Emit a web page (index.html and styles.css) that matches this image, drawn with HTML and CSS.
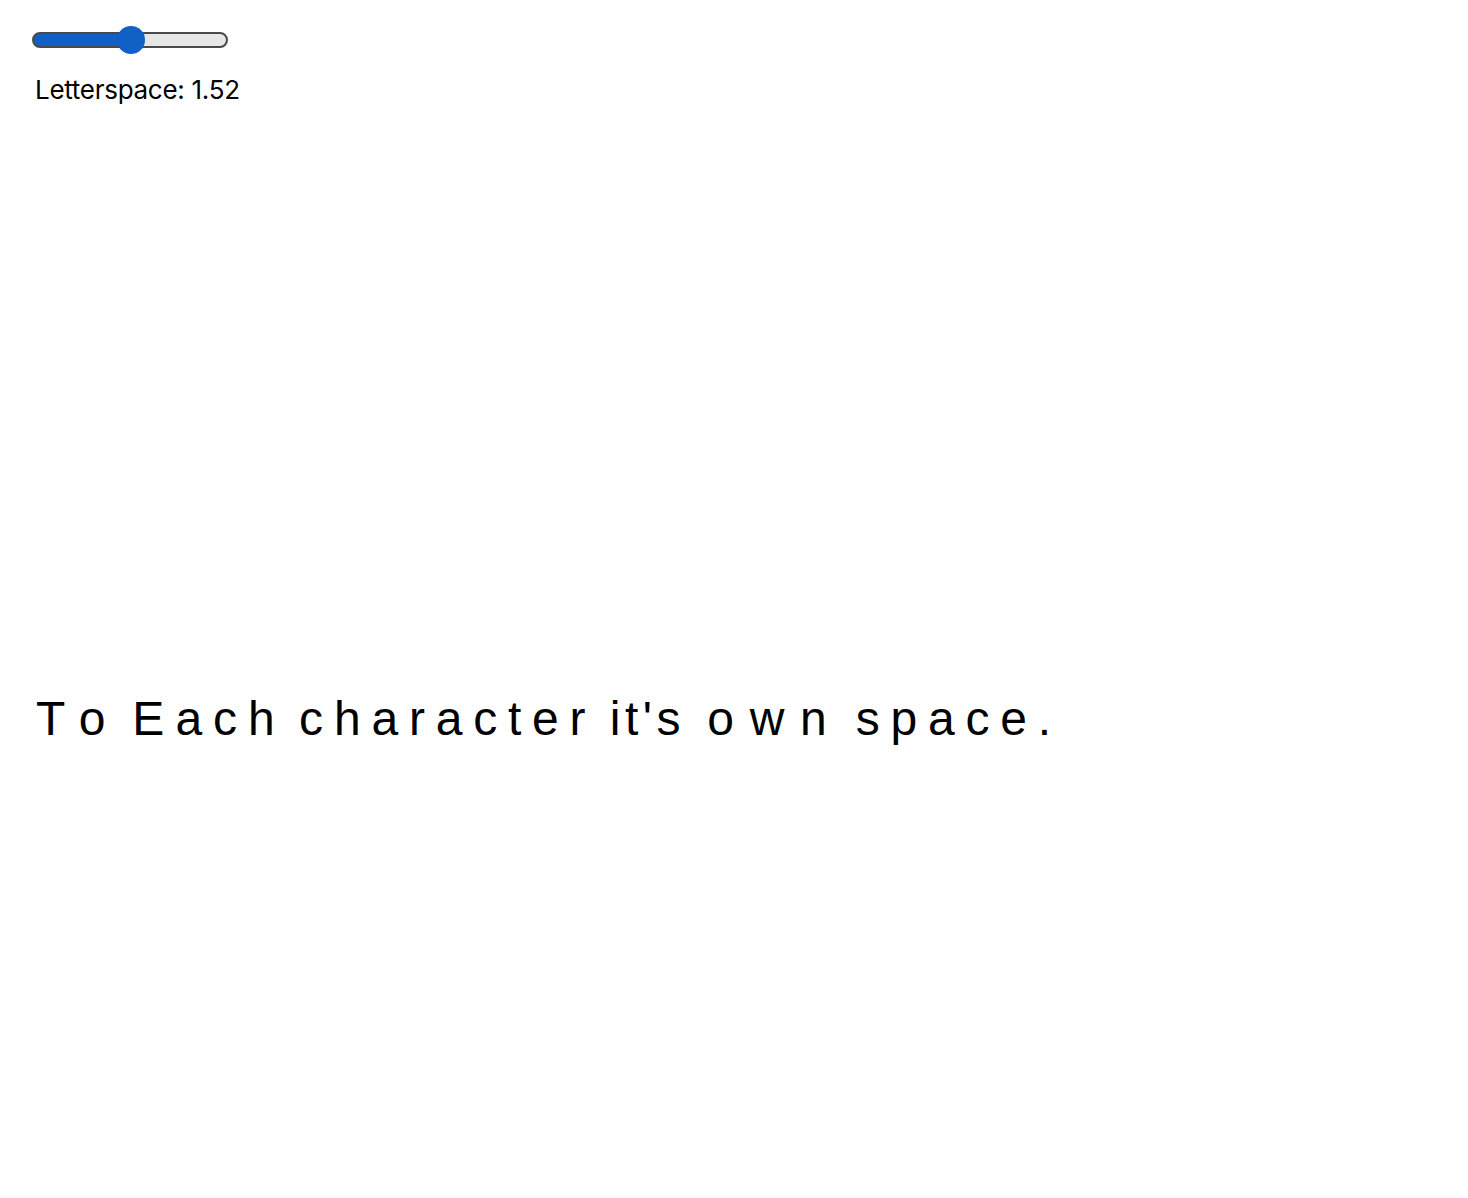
FILE: index.html
```html
<!DOCTYPE html>
<html lang="en">
<head>
<meta charset="utf-8">
<title>Letterspace</title>
<link rel="stylesheet" href="styles.css">
</head>
<body>
<main class="page">
  <section class="controls">
    <input class="slider" type="range" min="0" max="3" step="0.01" value="1.52" style="--fill: 51.3%" aria-label="Letterspace">
    <p class="label">Letterspace: 1.52</p>
  </section>
  <p class="specimen"><span class="word w-to">To</span> <span class="word w-each">Each</span> <span class="word w-character">character</span> <span class="word w-its"><span class="narrow">it'</span>s</span> <span class="word w-own">own</span> <span class="word w-space">space.</span></p>
</main>
</body>
</html>
```
FILE: styles.css
```css
html, body {
  margin: 0;
  padding: 0;
  background: #ffffff;
}

.page {
  display: flex;
  flex-direction: column;
  padding: 32px 0 0 0;
}

.controls {
  display: flex;
  flex-direction: column;
  align-items: flex-start;
  padding-left: 32px;
}

.slider {
  -webkit-appearance: none;
  appearance: none;
  margin: 0;
  padding: 0;
  width: 196px;
  height: 16px;
  box-sizing: border-box;
  border: 2px solid #4a4a4a;
  border-radius: 8px;
  background: linear-gradient(to right, #1160c6 0, #1160c6 var(--fill), #e6e6e6 var(--fill), #e6e6e6 100%);
  outline: none;
}

.slider::-webkit-slider-thumb {
  -webkit-appearance: none;
  appearance: none;
  width: 28px;
  height: 28px;
  border-radius: 50%;
  background: #1160c6;
  border: none;
}

.label {
  margin: 26px 0 0 3px;
  font-family: Inter, "Liberation Sans", sans-serif;
  font-size: 26px;
  line-height: 32px;
  letter-spacing: -0.011em;
  color: #000;
}

.specimen {
  margin: 585px 0 0 36px;
  font-family: "Liberation Sans", Arial, sans-serif;
  font-size: 48px;
  line-height: 55px;
  letter-spacing: 0;
  font-kerning: none;
  color: #000;
  white-space: nowrap;
}

.word {
  letter-spacing: 12px;
}

.w-to {
  letter-spacing: 13.5px;
}

.w-each {
  letter-spacing: 11px;
}

.w-character {
  letter-spacing: 10.8px;
}

.w-its {
  letter-spacing: 13.5px;
}

.w-own {
  letter-spacing: 15.7px;
}

.w-space {
  letter-spacing: 10.8px;
}

.narrow {
  letter-spacing: 4.5px;
}
```
